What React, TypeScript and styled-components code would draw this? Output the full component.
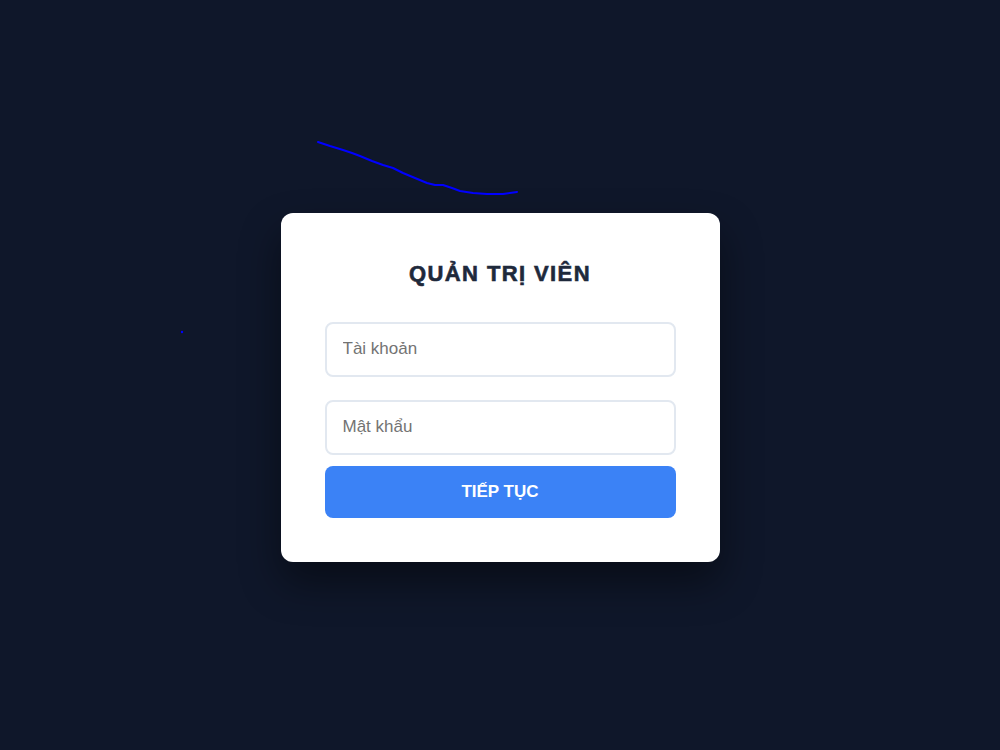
import styled, { createGlobalStyle } from 'styled-components';

const GlobalStyle = createGlobalStyle`
  html, body {
    margin: 0;
    padding: 0;
    background: #0f172a;
    font-family: "Liberation Sans", Arial, sans-serif;
  }
  * { box-sizing: border-box; }
`;

const Page = styled.div`
  position: relative;
  min-height: 100vh;
  padding-top: 24px;
  display: flex;
  align-items: center;
  justify-content: center;
  background: #0f172a;
  overflow: hidden;
`;

const Trail = styled.svg`
  position: absolute;
  left: 0;
  top: 0;
  width: 1000px;
  height: 750px;
  pointer-events: none;
`;

const Card = styled.form`
  width: 439px;
  background: #ffffff;
  border-radius: 12px;
  padding: 45px 44px 44px;
  display: flex;
  flex-direction: column;
  box-shadow: 0 20px 40px rgba(0, 0, 0, 0.45);
`;

const Title = styled.h1`
  margin: 0 0 32px;
  text-align: center;
  font-size: 22px;
  font-weight: 800;
  letter-spacing: 1.4px;
  color: #1e293b;
  line-height: 32px;
  -webkit-text-stroke: 0.6px #1e293b;
`;

const Field = styled.input<{ $gap: number }>`
  width: 100%;
  height: 55px;
  margin-bottom: ${(p) => p.$gap}px;
  padding: 0 16px;
  border: 2px solid #e2e8f0;
  border-radius: 8px;
  font-family: "Liberation Sans", Arial, sans-serif;
  font-size: 17px;
  color: #1e293b;
  outline: none;

  &::placeholder {
    color: #737373;
  }
`;

const Submit = styled.button`
  width: 100%;
  height: 52px;
  border: none;
  border-radius: 8px;
  background: #3b82f6;
  color: #ffffff;
  font-family: "Liberation Sans", Arial, sans-serif;
  font-size: 17px;
  font-weight: 700;
  cursor: pointer;
`;

export default function App() {
  return (
    <>
      <GlobalStyle />
      <Page>
        <Trail viewBox="0 0 1000 750">
          <polyline
            points="318,142 330,146 343,150 352,153 360,156 372,161 383,165 393,168 403,173 415,178 427,183 435,185 443,185 452,188 460,191 473,193 487,194 503,194 517,192"
            fill="none"
            stroke="#0000ff"
            strokeWidth="2"
            strokeLinecap="round"
            strokeLinejoin="round"
          />
          <circle cx="182" cy="332" r="1.2" fill="#0000ff" />
        </Trail>
        <Card onSubmit={(e) => e.preventDefault()}>
          <Title>QUẢN TRỊ VIÊN</Title>
          <Field $gap={23} type="text" placeholder="Tài khoản" />
          <Field $gap={11} type="password" placeholder="Mật khẩu" />
          <Submit type="submit">TIẾP TỤC</Submit>
        </Card>
      </Page>
    </>
  );
}
